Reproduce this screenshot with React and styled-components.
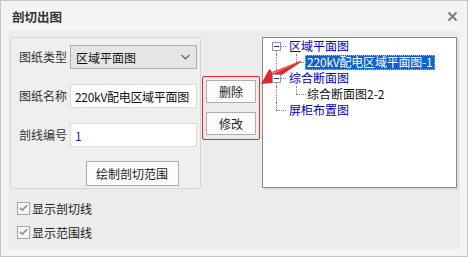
import styled, { createGlobalStyle } from 'styled-components'

const GlobalStyle = createGlobalStyle`
  html, body { margin: 0; padding: 0; background: #fff; }
  body {
    font-family: "Noto Sans CJK SC", "Microsoft YaHei", sans-serif;
    font-size: 12px;
    color: #222;
  }
  * { box-sizing: border-box; }
`

const Dialog = styled.div`
  position: relative;
  width: 468px;
  height: 257px;
  border: 1px solid #c6c6c6;
  background: #f4f4f4;
  display: flex;
  flex-direction: column;
`

const TitleBar = styled.div`
  height: 30px;
  display: flex;
  align-items: center;
  justify-content: space-between;
  padding: 0 9px 0 11px;
`

const Title = styled.span`
  font-size: 12.5px;
  font-weight: bold;
  color: #333;
`

const Body = styled.div`
  flex: 1;
  margin: 0 7px 7px 7px;
  background: #ececec;
  display: flex;
  align-items: flex-start;
  padding: 6px 0 0 2px;
`

const LeftCol = styled.div`
  width: 191px;
  display: flex;
  flex-direction: column;
`

const GroupBox = styled.div`
  height: 152px;
  border: 1px solid #d4d4d4;
  border-radius: 3px;
  background: #efefef;
  padding: 5px 3px 0 8px;
  display: grid;
  grid-template-columns: 48px 1fr;
  column-gap: 3px;
  row-gap: 11px;
  align-items: center;
`

const Label = styled.span`
  color: #333;
  line-height: 24px;
  white-space: nowrap;
`

const Select = styled.div`
  height: 24px;
  border: 1px solid #adadad;
  background: #e5e5e5;
  display: flex;
  align-items: center;
  justify-content: space-between;
  padding: 0 6px 0 5px;
  color: #111;
`

const Input = styled.div`
  height: 24px;
  border: 1px solid #dcdcdc;
  background: #fff;
  display: flex;
  align-items: center;
  padding: 0 4px;
  color: ${p => p.$blue ? '#1e1e8c' : '#111'};
  white-space: nowrap;
  overflow: hidden;
  letter-spacing: ${p => p.$tight ? '-0.3px' : '0'};
`

const Button = styled.div`
  width: ${p => p.$w}px;
  height: ${p => p.$h}px;
  border: 1px solid #adadad;
  background: #fbfbfb;
  display: flex;
  align-items: center;
  justify-content: center;
  color: #222;
`

const ButtonRow = styled.div`
  grid-column: 2;
  margin-top: -1px;
  display: flex;
  justify-content: center;
  padding-right: 3px;
`

const CheckList = styled.div`
  display: flex;
  flex-direction: column;
  gap: 8px;
  margin-top: 11px;
  padding-left: 7px;
`

const CheckRow = styled.label`
  display: flex;
  align-items: center;
  gap: 2px;
  height: 16px;
  color: #222;
`

const Box = styled.span`
  width: 13px;
  height: 13px;
  border: 1px solid #a3a3a3;
  background: #f7f7f7;
  display: flex;
  align-items: center;
  justify-content: center;
`

const ActionBox = styled.div`
  margin: 39px 0 0 1px;
  border: 1px solid #e8282d;
  border-radius: 2px;
  padding: 3px 3px 4px;
  display: flex;
  flex-direction: column;
  gap: 9px;
`

const TreePanel = styled.div`
  margin-left: 2px;
  width: 195px;
  height: 151px;
  background: #fff;
  border: 1px solid #8a8a8a;
  box-shadow: 2px 2px 0 #dcdcdc;
  padding: 0 0 0 3px;
`

const Row = styled.div`
  height: 16px;
  display: flex;
  align-items: center;
`

const Gutter = styled.span`
  position: relative;
  width: 20px;
  height: 16px;
  flex: none;
  &::before {
    content: '';
    position: absolute;
    left: 10px;
    top: ${p => p.$up ? '0' : '8px'};
    bottom: ${p => p.$down ? '0' : '8px'};
    border-left: 1px dotted #7f7f7f;
  }
  &::after {
    content: '';
    position: absolute;
    left: 10px;
    right: 0;
    top: 8px;
    border-top: ${p => p.$right ? '1px dotted #7f7f7f' : 'none'};
  }
`

const Expander = styled.span`
  position: absolute;
  z-index: 1;
  left: 6px;
  top: 4px;
  width: 9px;
  height: 9px;
  border: 1px solid #8e97b0;
  background: #fff;
  &::after {
    content: '';
    position: absolute;
    left: 1px;
    top: 3px;
    width: 5px;
    height: 1px;
    background: #1c2f88;
  }
`

const NodeLabel = styled.span`
  height: 15px;
  line-height: 14px;
  padding: 0 2px;
  margin-left: ${p => p.$shift || 0}px;
  white-space: nowrap;
  letter-spacing: ${p => p.$selected ? '-0.2px' : '0'};
  color: ${p => p.$selected ? '#fff' : p.$blue ? '#0000c8' : '#111'};
  background: ${p => p.$selected ? '#0b62d0' : 'transparent'};
  outline: ${p => p.$selected ? '1px dotted #f0b040' : 'none'};
  outline-offset: -1px;
`

const Overlay = styled.svg`
  position: absolute;
  left: 0;
  top: 0;
  pointer-events: none;
`

const CloseIcon = () => (
  <svg width="11" height="11" viewBox="0 0 11 11">
    <path d="M1.5 1.5 L9.5 9.5 M9.5 1.5 L1.5 9.5" stroke="#7b7b7b" strokeWidth="1.8" />
  </svg>
)

const Chevron = () => (
  <svg width="9" height="6" viewBox="0 0 9 6">
    <path d="M0.5 0.8 L4.5 4.8 L8.5 0.8" stroke="#555" strokeWidth="1.2" fill="none" />
  </svg>
)

const Tick = () => (
  <svg width="9" height="8" viewBox="0 0 9 8">
    <path d="M1 3.8 L3.4 6.2 L8 1.4" stroke="#8a8a8a" strokeWidth="1.6" fill="none" />
  </svg>
)

// red pointer from the selected node down to the action buttons
const Arrow = () => (
  <Overlay width="468" height="257" viewBox="0 0 468 257">
    <polygon points="300.6,59.4 299.4,61.6 275.4,77.4 271.6,70.8" fill="#e3262b" />
    <polygon points="260,83 268.5,67.8 278.5,81.2" fill="#e3262b" />
    <polygon points="300,59.8 271.8,71.6 272.6,73" fill="#f47a7a" />
  </Overlay>
)

const tree = [
  { text: '区域平面图', gutters: [{ $down: true, $right: true, exp: true }], blue: true },
  { text: '220kV配电区域平面图-1', gutters: [{ $up: true, $down: true }, { $up: true, $right: true }], selected: true },
  { text: '综合断面图', gutters: [{ $up: true, $down: true, $right: true, exp: true }], blue: true },
  { text: '综合断面图2-2', gutters: [{ $up: true, $down: true }, { $up: true, $right: true }] },
  { text: '屏柜布置图', gutters: [{ $up: true, $right: true }], blue: true },
]

export default function App() {
  return (
    <>
      <GlobalStyle />
      <Dialog>
        <TitleBar>
          <Title>剖切出图</Title>
          <CloseIcon />
        </TitleBar>
        <Body>
          <LeftCol>
            <GroupBox>
              <Label>图纸类型</Label>
              <Select>
                <span>区域平面图</span>
                <Chevron />
              </Select>
              <Label>图纸名称</Label>
              <Input $tight>220kV配电区域平面图</Input>
              <Label>剖线编号</Label>
              <Input $blue>1</Input>
              <ButtonRow>
                <Button $w={93} $h={25}>绘制剖切范围</Button>
              </ButtonRow>
            </GroupBox>
            <CheckList>
              <CheckRow><Box><Tick /></Box>显示剖切线</CheckRow>
              <CheckRow><Box><Tick /></Box>显示范围线</CheckRow>
            </CheckList>
          </LeftCol>
          <ActionBox>
            <Button $w={50} $h={23}>删除</Button>
            <Button $w={50} $h={23}>修改</Button>
          </ActionBox>
          <TreePanel>
            {tree.map(node => (
              <Row key={node.text}>
                {node.gutters.map((g, i) => (
                  <Gutter key={i} {...g}>{g.exp && <Expander />}</Gutter>
                ))}
                <NodeLabel $blue={node.blue} $selected={node.selected} $shift={node.gutters.length > 1 ? -1 : 1}>
                  {node.text}
                </NodeLabel>
              </Row>
            ))}
          </TreePanel>
        </Body>
        <Arrow />
      </Dialog>
    </>
  )
}
